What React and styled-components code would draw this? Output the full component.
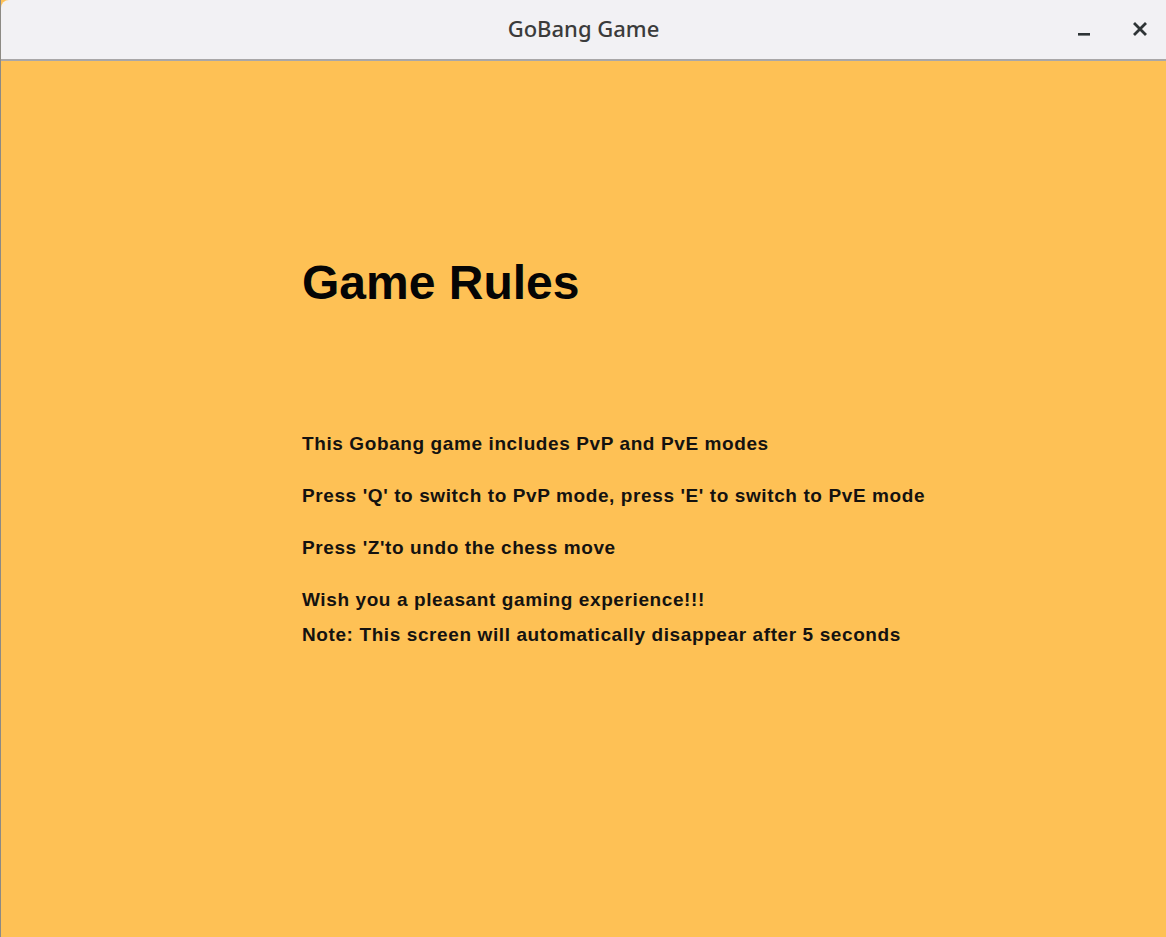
import React from 'react';
import styled, { createGlobalStyle } from 'styled-components';

const GlobalStyle = createGlobalStyle`
  html, body {
    margin: 0;
    padding: 0;
    background: #fec155;
  }
`;

const Window = styled.div`
  width: 1166px;
  height: 937px;
  display: flex;
  flex-direction: column;
  overflow: hidden;
  border-left: 1px solid #8d8a84;
  box-sizing: border-box;
`;

const TitleBar = styled.div`
  height: 61px;
  flex-shrink: 0;
  display: grid;
  grid-template-columns: 1fr auto 1fr;
  align-items: center;
  background: #f2f1f4;
  border-bottom: 2px solid #a9a7a8;
  border-top-left-radius: 8px;
  box-sizing: border-box;
`;

const Title = styled.div`
  grid-column: 2;
  font-family: 'Noto Sans', 'DejaVu Sans', sans-serif;
  font-size: 22px;
  font-weight: 500;
  color: #3b3b3b;
  padding-bottom: 4px;
`;

const Controls = styled.div`
  grid-column: 3;
  justify-self: end;
  display: flex;
  align-items: center;
  gap: 40px;
  padding-right: 18px;
  padding-bottom: 2px;
`;

const ControlButton = styled.button`
  border: none;
  background: none;
  padding: 0;
  width: 16px;
  height: 16px;
  display: flex;
  align-items: center;
  justify-content: center;
  color: #2e3436;
`;

const Content = styled.main`
  flex: 1;
  background: #fec155;
  padding: 195px 0 0 301px;
  font-family: 'Liberation Sans', Arial, sans-serif;
  color: #000;
`;

const Heading = styled.h1`
  margin: 0 0 122px;
  font-size: 48px;
  font-weight: 700;
  line-height: 54px;
  color: #050505;
`;

const Rule = styled.p`
  margin: 0 0 ${(p) => (p.$tight ? '11px' : '28px')};
  font-size: 19px;
  font-weight: 700;
  line-height: 24px;
  letter-spacing: 0.6px;
  color: #141210;
`;

const MinimizeIcon = () => (
  <svg width="16" height="16" viewBox="0 0 16 16">
    <rect x="2" y="12" width="12" height="2.6" fill="currentColor" />
  </svg>
);

const CloseIcon = () => (
  <svg width="16" height="16" viewBox="0 0 16 16">
    <path d="M3 3 L13 13 M13 3 L3 13" stroke="currentColor" strokeWidth="2.8" strokeLinecap="square" />
  </svg>
);

const rules = [
  'This Gobang game includes PvP and PvE modes',
  "Press 'Q' to switch to PvP mode, press 'E' to switch to PvE mode",
  "Press 'Z'to undo the chess move",
];

const App = () => (
  <>
    <GlobalStyle />
    <Window>
      <TitleBar>
        <Title>GoBang Game</Title>
        <Controls>
          <ControlButton aria-label="Minimize"><MinimizeIcon /></ControlButton>
          <ControlButton aria-label="Close"><CloseIcon /></ControlButton>
        </Controls>
      </TitleBar>
      <Content>
        <Heading>Game Rules</Heading>
        {rules.map((rule) => (
          <Rule key={rule}>{rule}</Rule>
        ))}
        <Rule $tight>Wish you a pleasant gaming experience!!!</Rule>
        <Rule>Note: This screen will automatically disappear after 5 seconds</Rule>
      </Content>
    </Window>
  </>
);

export default App;
